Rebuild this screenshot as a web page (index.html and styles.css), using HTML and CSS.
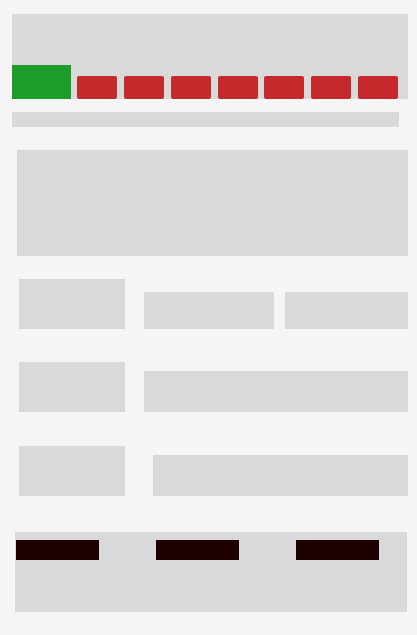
FILE: index.html
```html
<!DOCTYPE html>
<html>
<head>
<meta charset="utf-8">
<link rel="stylesheet" href="styles.css">
</head>
<body>
<div class="page">
  <div class="header">
    <div class="tab-active"></div>
    <div class="tabs">
      <div class="tab"></div>
      <div class="tab"></div>
      <div class="tab"></div>
      <div class="tab"></div>
      <div class="tab"></div>
      <div class="tab"></div>
      <div class="tab"></div>
    </div>
  </div>
  <div class="subbar"></div>
  <div class="hero"></div>
  <div class="row row-1">
    <div class="label"></div>
    <div class="field f-a"></div>
    <div class="field f-b"></div>
  </div>
  <div class="row row-2">
    <div class="label"></div>
    <div class="field f-c"></div>
  </div>
  <div class="row row-3">
    <div class="label"></div>
    <div class="field f-d"></div>
  </div>
  <div class="footer">
    <div class="btn"></div>
    <div class="btn"></div>
    <div class="btn"></div>
  </div>
</div>
</body>
</html>
```

FILE: styles.css
```css
html, body {
  margin: 0;
  padding: 0;
  background: #f5f5f5;
  font-family: "Liberation Sans", Arial, sans-serif;
}
.page {
  width: 417px;
  height: 635px;
  display: flex;
  flex-direction: column;
}
.header {
  margin: 14px 0 0 12px;
  width: 396px;
  height: 85px;
  background: #d9d9d9;
  display: flex;
  align-items: flex-end;
}
.tab-active {
  width: 59px;
  height: 34px;
  background: #1d9e2b;
}
.tabs {
  margin-left: 6px;
  display: flex;
  gap: 6.85px;
}
.tab {
  width: 40px;
  height: 23px;
  background: #c5292c;
  border-radius: 2px;
}
.subbar {
  margin: 13px 0 0 12px;
  width: 387px;
  height: 15px;
  background: #d9d9d9;
}
.hero {
  margin: 23px 0 0 17px;
  width: 391px;
  height: 106px;
  background: #d9d9d9;
}
.row {
  display: flex;
  align-items: flex-end;
  margin-left: 19px;
}
.row-1 { margin-top: 23px; }
.row-2 { margin-top: 33px; }
.row-3 { margin-top: 34px; }
.label {
  width: 106px;
  height: 50px;
  background: #d9d9d9;
}
.field {
  background: #d9d9d9;
}
.f-a { margin-left: 19px; width: 130px; height: 37px; }
.f-b { margin-left: 11px; width: 123px; height: 37px; }
.f-c { margin-left: 19px; width: 264px; height: 41px; }
.f-d { margin-left: 28px; width: 255px; height: 41px; }
.footer {
  margin: 36px 0 0 15px;
  width: 392px;
  height: 80px;
  box-sizing: border-box;
  padding: 8px 0 0 1px;
  background: #d9d9d9;
  display: flex;
  align-items: flex-start;
  gap: 57px;
}
.btn {
  width: 83px;
  height: 20px;
  background: #1e0101;
}
```
